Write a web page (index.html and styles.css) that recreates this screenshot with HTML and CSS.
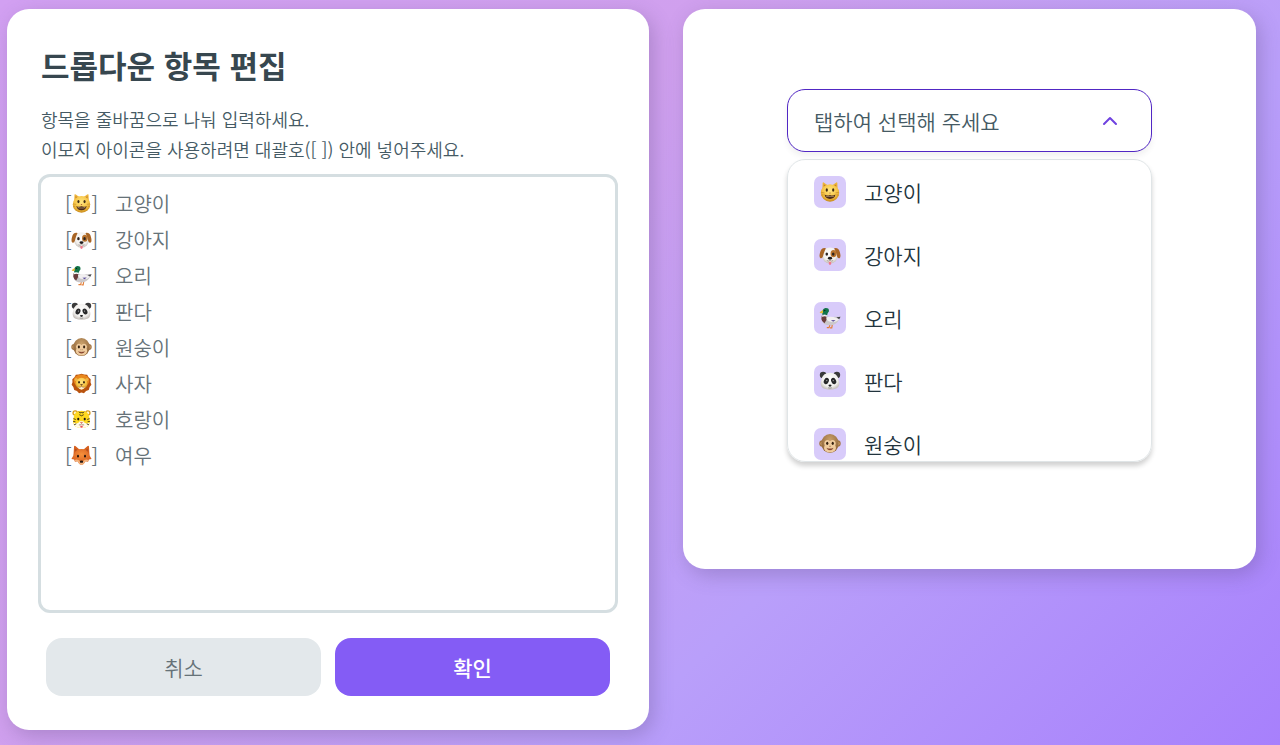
FILE: index.html
```html
<!DOCTYPE html>
<html lang="ko">
  <head>
    <meta charset="utf-8" />
    <meta name="viewport" content="width=device-width, initial-scale=1" />
    <title>드롭다운 항목 편집</title>
    <link rel="stylesheet" href="styles.css">
    <script src="script.js" defer></script>
  </head>
  <body>

    <!-- one drawing per animal, used in the editor and in the menu -->
    <svg class="sprite" aria-hidden="true">
      <defs>
        <radialGradient id="gold" cx="50%" cy="35%" r="65%">
          <stop offset="0" stop-color="#ffe782"/>
          <stop offset="0.65" stop-color="#f6c243"/>
          <stop offset="1" stop-color="#c88a1c"/>
        </radialGradient>
        <radialGradient id="pale" cx="50%" cy="40%" r="60%">
          <stop offset="0" stop-color="#ffffff"/>
          <stop offset="0.7" stop-color="#f1efec"/>
          <stop offset="1" stop-color="#c5bfba"/>
        </radialGradient>
        <radialGradient id="brown" cx="50%" cy="30%" r="70%">
          <stop offset="0" stop-color="#c9a06a"/>
          <stop offset="1" stop-color="#8c6136"/>
        </radialGradient>
        <radialGradient id="fur" cx="50%" cy="35%" r="65%">
          <stop offset="0" stop-color="#f7913c"/>
          <stop offset="1" stop-color="#d1561a"/>
        </radialGradient>
      </defs>

      <symbol id="cat" viewBox="0 0 24 24">
        <path d="M3.5 12 L4 1.8 Q4.6 1 5.5 1.8 L9.5 4.5 H14.5 L18.5 1.8 Q19.4 1 20 1.8 L20.5 12Z" fill="#eeb53a"/>
        <path d="M5.2 3.5 L8 5.5 L5.2 8Z M18.8 3.500 L16 5.5 L18.8 8Z" fill="#c47f2c"/>
        <ellipse cx="12" cy="13" rx="10" ry="9.5" fill="url(#gold)"/>
        <ellipse cx="8.5" cy="9.8" rx="1.2" ry="1.8" fill="#402c16"/>
        <ellipse cx="15.5" cy="9.8" rx="1.2" ry="1.8" fill="#402c16"/>
        <path d="M11 12.7 H13 L12 13.9Z" fill="#a8562a"/>
        <path d="M6 14.8 Q9 16.5 12 15.2 Q15 16.500 18 14.8 Q17 19.6 12 19.6 Q7 19.6 6 14.8Z" fill="#4c2a17"/>
        <path d="M7.5 16.2 Q12 17.500 16.5 16.2 L16 17 Q12 18 8 17Z" fill="#d9c49a"/>
        <path d="M2.5 12.5 L6 13 M2.500 15.500 L5 15 M21.5 12.5 L18 13 M21.5 15.5 L19 15" stroke="#b67c21" stroke-width="0.6"/>
      </symbol>

      <symbol id="dog" viewBox="0 0 24 24">
        <ellipse cx="12" cy="12.500" rx="8.5" ry="8.8" fill="url(#pale)"/>
        <path d="M7.5 4.5 Q2.5 3.5 1.2 9 Q-0.2 14 1.5 15.5 Q4 16.5 5 11 Q6 7.5 7.5 4.5Z" fill="#a86526"/>
        <path d="M16.5 4.5 Q21.5 3.5 22.8 9 Q24.2 14 22.5 15.5 Q20 16.5 19 11 Q18 7.5 16.5 4.5Z" fill="#a86526"/>
        <ellipse cx="15.8" cy="10.5" rx="3.2" ry="4" fill="#b8742f"/>
        <ellipse cx="8.5" cy="11" rx="1.4" ry="1.8" fill="#2d2421"/>
        <ellipse cx="15.5" cy="11" rx="1.4" ry="1.8" fill="#2d2421"/>
        <ellipse cx="12" cy="15.5" rx="2.3" ry="1.600" fill="#1d1a1a"/>
        <path d="M8.5 18 Q10.5 19.400 12 17.600 Q13.5 19.4 15.5 18" fill="none" stroke="#8a7b74" stroke-width="0.7"/>
        <path d="M10.7 19.4 H13.3 V21.200 Q13.3 22.8 12 22.8 Q10.7 22.8 10.7 21.2Z" fill="#f17889"/>
      </symbol>

      <symbol id="duck" viewBox="0 0 24 24">
        <path d="M12 19 L11 22.5 M14.5 19 L14 22.5 M8.5 22.5 H11.5 M12 22.7 H14.5" stroke="#e4803a" stroke-width="1.3"/>
        <path d="M3 10 Q6 9 9 10 Q12 12 17 10.5 L23.5 10.5 L22 13.5 Q19 19.5 12 20 Q4 20 3 14Z" fill="#cbc8ca"/>
        <path d="M3 9.5 Q6 8.5 8.5 9.5 Q9 14 6 17.8 Q3 16 2.6 13Z" fill="#6a3d3c"/>
        <path d="M8 11.500 Q13 9.5 19 12 L22 13.5 Q17 18 10.5 15.5 Q8 14 8 11.500Z" fill="#f1eff0"/>
        <path d="M13 14.5 L18 14.3 L15.5 16.2Z" fill="#5a4c9a"/>
        <path d="M19 11.3 L23.5 10.500 L22 13.300Z" fill="#45474a"/>
        <path d="M3.5 9.2 Q6 8 8.8 9.2 L8.7 10.5 Q6 9.5 3.3 10.7Z" fill="#fff"/>
        <path d="M3.7 8.7 Q2.8 2 7 1.2 Q11.5 1 10.8 5 Q9.2 6.2 8.9 8.9 Q6 7.8 3.7 8.7Z" fill="#137449"/>
        <path d="M4.2 3.3 Q1 5.3 0.7 6.3 Q2 7.3 4.5 6.2Z" fill="#e3ba35"/>
        <circle cx="6.3" cy="3.8" r="0.7" fill="#0d1713"/>
      </symbol>

      <symbol id="panda" viewBox="0 0 24 24">
        <circle cx="4.5" cy="5.5" r="3.6" fill="#3a3a3b"/>
        <circle cx="19.5" cy="5.5" r="3.6" fill="#3a3a3b"/>
        <path d="M12 3 Q20 3 21.5 11 Q23.5 17 19.5 20 Q12 23 4.5 20 Q0.5 17 2.5 11 Q4 3 12 3Z" fill="url(#pale)"/>
        <ellipse cx="8" cy="12" rx="2.6" ry="3.6" transform="rotate(25 8 12)" fill="#29292a"/>
        <ellipse cx="16" cy="12" rx="2.6" ry="3.6" transform="rotate(-25 16 12)" fill="#29292a"/>
        <circle cx="8.5" cy="11.500" r="0.7" fill="#b5b5b5"/>
        <circle cx="15.5" cy="11.5" r="0.7" fill="#b5b5b5"/>
        <path d="M10.2 16.3 Q12 15.5 13.8 16.3 Q13.5 18 12 18.2 Q10.5 18 10.2 16.3Z" fill="#1f1f20"/>
        <path d="M10 19.400 Q12 20.200 14 19.4" fill="none" stroke="#6b6b6b" stroke-width="0.7"/>
      </symbol>

      <symbol id="monkey" viewBox="0 0 24 24">
        <circle cx="3.8" cy="11.5" r="3.5" fill="#a27644"/>
        <circle cx="20.2" cy="11.5" r="3.5" fill="#a27644"/>
        <circle cx="3.6" cy="11.5" r="2" fill="#d9ab76"/>
        <circle cx="20.4" cy="11.5" r="2" fill="#d9ab76"/>
        <ellipse cx="12" cy="11.5" rx="9.5" ry="10.3" fill="url(#brown)"/>
        <path d="M12 9 Q15 6.5 17.5 9 Q19 11 17.8 13.5 Q19.5 17 17 19.5 Q12 23 7 19.5 Q4.5 17 6.2 13.5 Q5 11 6.5 9 Q9 6.5 12 9Z" fill="#efcb9d"/>
        <ellipse cx="9" cy="11.3" rx="1.2" ry="1.7" fill="#34200f"/>
        <ellipse cx="15" cy="11.3" rx="1.2" ry="1.7" fill="#34200f"/>
        <path d="M11 14.5 H11.6 M12.5 14.5 H13.1" stroke="#7b5030" stroke-width="0.9"/>
        <path d="M8.5 16.8 Q12 20.3 15.5 16.8 Q12 17.8 8.5 16.8Z" fill="#893f2b" stroke="#6f3521" stroke-width="0.4"/>
      </symbol>

      <symbol id="lion" viewBox="0 0 24 24">
        <path d="M12 0.8 L15 1.8 L18.5 2 L20 4.8 L22.5 7 L22.3 10.5 L23.3 13.5 L21.3 16 L20.3 19.5 L17.2 20.7 L14.8 23 L12 22.3 L9.2 23 L6.8 20.7 L3.7 19.5 L2.7 16 L0.7 13.5 L1.7 10.5 L1.5 7 L4 4.8 L5.5 2 L9 1.8Z" fill="#b9530f"/>
        <path d="M12 1.8 Q20 2 21 9 Q20 15 12 17 Q4 15 3 9 Q4 2 12 1.8Z" fill="#e8871c"/>
        <circle cx="5.8" cy="7.5" r="1.8" fill="#eeb447"/>
        <circle cx="18.2" cy="7.5" r="1.8" fill="#eeb447"/>
        <ellipse cx="12" cy="12" rx="6.8" ry="6.5" fill="url(#gold)"/>
        <ellipse cx="9.2" cy="10.5" rx="1" ry="1.4" fill="#302211"/>
        <ellipse cx="14.8" cy="10.5" rx="1" ry="1.4" fill="#302211"/>
        <path d="M10.3 12.8 H13.7 L12 14.6Z" fill="#4c2c17"/>
        <path d="M8 15.5 Q10 16.8 12 15.3 Q14 16.8 16 15.500 Q15 19 12 19 Q9 19 8 15.5Z" fill="#fff0cc"/>
        <path d="M8.500 16 Q10 17 12 15.5 Q14 17 15.5 16" fill="none" stroke="#8a4c20" stroke-width="0.6"/>
      </symbol>

      <symbol id="tiger" viewBox="0 0 24 24">
        <circle cx="4.8" cy="4.5" r="3.2" fill="#d89a18"/>
        <circle cx="19.2" cy="4.5" r="3.2" fill="#d89a18"/>
        <circle cx="4.8" cy="4.5" r="1.7" fill="#fff3cd"/>
        <circle cx="19.2" cy="4.5" r="1.7" fill="#fff3cd"/>
        <path d="M12 2 Q20 2 21 10 Q23 17 19 20 Q12 23.5 5 20 Q1 17 3 10 Q4 2 12 2Z" fill="#ffd820"/>
        <path d="M3 15.5 Q8 18 10 14 H14 Q16 18 21 15.5 Q21.5 19 18 20.5 Q12 23 6 20.5 Q2.5 19 3 15.5Z" fill="#fffbea"/>
        <path d="M9 3 Q10 5.500 12 4 Q14 5.500 15 3 M9.500 6.5 Q12 9 14.500 6.5 M2.800 11 L5.500 12 M2.5 14.300 L5 14.500 M3.5 18 L6 17 M21.200 11 L18.500 12 M21.5 14.3 L19 14.5 M20.5 18 L18 17" fill="none" stroke="#3a301a" stroke-width="1"/>
        <ellipse cx="8.3" cy="11.5" rx="1.2" ry="1.6" fill="#1d1915"/>
        <ellipse cx="15.7" cy="11.5" rx="1.2" ry="1.6" fill="#1d1915"/>
        <path d="M10 14.8 H14 L12 16.8Z" fill="#dd806e"/>
        <path d="M9 18.200 Q10.800 18.5 12 17.2 Q13.2 18.5 15 18.2" fill="none" stroke="#5c3a1e" stroke-width="0.6"/>
        <path d="M10.5 19 H13.5 Q13.5 21.5 12 21.5 Q10.5 21.5 10.5 19Z" fill="#e94f55"/>
      </symbol>

      <symbol id="fox" viewBox="0 0 24 24">
        <path d="M2.8 12 L3.5 1.5 Q4 0.5 5 1.2 L10 5.5 H14 L19 1.2 Q20 0.5 20.5 1.5 L21.2 12Z" fill="#d6601f"/>
        <path d="M5 4 L7.500 6.5 L5.2 8.500Z M19 4 L16.500 6.5 L18.8 8.5Z" fill="#9c4520"/>
        <path d="M12 4.5 Q19 4.5 20.5 10.5 L23.5 16 L20.5 16.5 L19.5 19 L16.5 18.7 Q14.5 22.8 12 22.8 Q9.5 22.8 7.5 18.7 L4.5 19 L3.5 16.5 L0.5 16 L3.5 10.5 Q5 4.5 12 4.5Z" fill="url(#fur)"/>
        <path d="M4 17 Q8 15.500 10.5 18.5 H13.5 Q16 15.5 20 17 L19.3 18.5 L16.5 18.7 Q14.5 22.8 12 22.8 Q9.5 22.8 7.5 18.7 L4.7 18.5Z" fill="#f3b27c"/>
        <ellipse cx="8" cy="12.8" rx="1.1" ry="1.6" fill="#2b1710"/>
        <ellipse cx="16" cy="12.8" rx="1.1" ry="1.6" fill="#2b1710"/>
        <ellipse cx="12" cy="19" rx="1.9" ry="1.4" fill="#241916"/>
      </symbol>
    </svg>

    <main class="page">
      <form class="card editor">
        <div class="intro">
          <h1>드롭다운 항목 편집</h1>
          <label for="items">항목을 줄바꿈으로 나눠 입력하세요.<br>이모지 아이콘을 사용하려면 대괄호([ ]) 안에 넣어주세요.</label>
        </div>

        <div class="items-box">
          <textarea id="items" class="items" spellcheck="false">[　]   고양이
[　]   강아지
[　]   오리
[　]   판다
[　]   원숭이
[　]   사자
[　]   호랑이
[　]   여우</textarea>
          <!-- icons sit in the brackets, one per text line -->
          <div class="line-icons" aria-hidden="true">
            <svg><use href="#cat"/></svg>
            <svg><use href="#dog"/></svg>
            <svg><use href="#duck"/></svg>
            <svg><use href="#panda"/></svg>
            <svg><use href="#monkey"/></svg>
            <svg><use href="#lion"/></svg>
            <svg><use href="#tiger"/></svg>
            <svg><use href="#fox"/></svg>
          </div>
        </div>

        <div class="actions">
          <button type="button" class="btn cancel">취소</button>
          <button type="submit" class="btn confirm">확인</button>
        </div>
      </form>

      <section class="card preview">
        <div class="trigger">
          <select id="animal" class="trigger-select" aria-label="동물 선택">
            <option value="">탭하여 선택해 주세요</option>
            <option>고양이</option>
            <option>강아지</option>
            <option>오리</option>
            <option>판다</option>
            <option>원숭이</option>
            <option>사자</option>
            <option>호랑이</option>
            <option>여우</option>
          </select>
          <svg class="chevron" viewBox="0 0 16 10" aria-hidden="true"><path d="M2 8 L8 2 L14 8"/></svg>
        </div>
        <ul class="menu">
          <li><button type="button" class="option"><span class="badge"><svg><use href="#cat"/></svg></span><span>고양이</span></button></li>
          <li><button type="button" class="option"><span class="badge"><svg><use href="#dog"/></svg></span><span>강아지</span></button></li>
          <li><button type="button" class="option"><span class="badge"><svg><use href="#duck"/></svg></span><span>오리</span></button></li>
          <li><button type="button" class="option"><span class="badge"><svg><use href="#panda"/></svg></span><span>판다</span></button></li>
          <li><button type="button" class="option"><span class="badge"><svg><use href="#monkey"/></svg></span><span>원숭이</span></button></li>
        </ul>
      </section>
    </main>
  </body>
</html>
```
FILE: styles.css
```css
* {
  box-sizing: border-box;
}

body {
  margin: 0;
  min-height: 100vh;
  font-family: "Noto Sans CJK KR", sans-serif;
  font-weight: 350;
  color: #37474f;
  background: linear-gradient(135deg, #d2a0f2 0%, #d0a0ee 36%, #b99ffa 67%, #a780fc 100%);
}

.sprite {
  position: absolute;
  width: 0;
  height: 0;
}

.page {
  display: grid;
  grid-template-columns: 642fr 573fr;
  align-items: start;
  gap: 34px;
  padding: 9px 24px 15px 7px;
}

.card {
  background: #fff;
  border-radius: 22px;
  box-shadow: 4px 6px 20px rgba(80, 60, 110, 0.28);
}

/* left side */
.editor {
  padding: 31px 31px 34px;
}

.intro {
  padding: 0 3px;
}

.intro h1 {
  margin: 0 0 14px;
  font-size: 31px;
  line-height: 50px;
  font-weight: 700;
}

.intro label {
  display: block;
  font-size: 18px;
  line-height: 30px;
  color: #455a64;
}

.items-box {
  position: relative;
  margin-top: 10px;
}

.items {
  display: block;
  width: 100%;
  height: 439px;
  padding: 9px 24px;
  border: 3px solid #d5dee1;
  border-radius: 12px;
  resize: none;
  outline: none;
  font: inherit;
  font-size: 20px;
  line-height: 36px;
  color: #667278;
}

/* same top padding and line height as the textarea */
.line-icons {
  position: absolute;
  top: 11px;
  left: 33px;
  display: grid;
  grid-auto-rows: 36px;
  align-items: center;
  pointer-events: none;
}

.line-icons svg {
  width: 21px;
  height: 21px;
}

.actions {
  display: flex;
  gap: 14px;
  padding: 0 8px;
  margin-top: 25px;
}

.btn {
  flex: 1;
  height: 58px;
  border: 0;
  border-radius: 16px;
  font: inherit;
  font-size: 21px;
  cursor: pointer;
}

.cancel {
  background: #e3e8eb;
  color: #667278;
}

.confirm {
  background: #845cf5;
  color: #fff;
  font-weight: 500;
}

/* right side */
.preview {
  padding: 80px 104px 107px;
}

.trigger {
  position: relative;
}

.trigger-select {
  display: block;
  width: 100%;
  height: 63px;
  padding: 0 26px;
  appearance: none;
  background: #fff;
  border: 1px solid #5127c4;
  border-radius: 18px;
  box-shadow: 0 4px 6px rgba(0, 0, 0, 0.06);
  font: inherit;
  font-size: 21px;
  color: #455a64;
}

.chevron {
  position: absolute;
  top: 27px;
  right: 34px;
  width: 16px;
  height: 10px;
  pointer-events: none;
}

.chevron path {
  fill: none;
  stroke: #6f42e0;
  stroke-width: 2;
  stroke-linecap: round;
  stroke-linejoin: round;
}

.menu {
  height: 303px;
  margin: 7px 0 0;
  padding: 0;
  overflow: hidden;
  list-style: none;
  border: 1px solid #e0e5e7;
  border-radius: 18px;
  box-shadow: 0 4px 5px rgba(0, 0, 0, 0.18);
}

.option {
  display: flex;
  align-items: center;
  gap: 18px;
  width: 100%;
  height: 63px;
  padding: 0 26px;
  border: 0;
  background: none;
  font: inherit;
  font-size: 21px;
  color: #22343d;
  cursor: pointer;
}

.badge {
  display: grid;
  place-items: center;
  width: 32px;
  height: 32px;
  border-radius: 7px;
  background: #d8cbfa;
}

.badge svg {
  width: 22px;
  height: 22px;
}
```
FILE: script.js
```js
const animal = document.getElementById('animal')

// picking a row in the menu sets the value of the select
document.querySelectorAll('.option').forEach((option) => {
  option.addEventListener('click', () => {
    animal.value = option.textContent.trim()
  })
})

document.querySelector('.editor').addEventListener('submit', (event) => {
  event.preventDefault()
})
```
